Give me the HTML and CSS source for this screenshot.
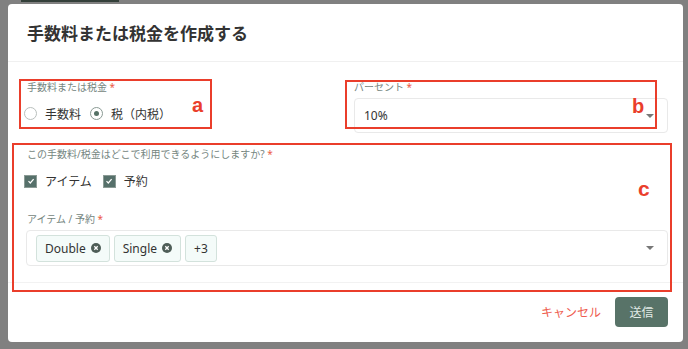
FILE: index.html
```html
<!DOCTYPE html>
<html lang="ja">
<head>
  <meta charset="UTF-8">
  <meta name="viewport" content="width=device-width, initial-scale=1.0">
  <title>手数料または税金を作成する</title>
  <link rel="stylesheet" href="styles.css">
</head>
<body>
  <!-- ページの一部（オーバーレイの下） -->
  <div class="behind-bar"></div>

  <div class="modal">
    <div class="modal-header">
      <h2>手数料または税金を作成する</h2>
    </div>

    <div class="modal-body">
      <div class="two-col">
        <div class="field">
          <div class="field-label">手数料または税金 <span class="req">*</span></div>
          <div class="choice-row">
            <label class="radio"><span class="radio-mark"></span>手数料</label>
            <label class="radio checked"><span class="radio-mark"></span>税（内税）</label>
          </div>
        </div>
        <div class="field">
          <div class="field-label">パーセント <span class="req">*</span></div>
          <div class="select">
            <span>10%</span>
            <span class="caret"></span>
          </div>
        </div>
      </div>

      <div class="field">
        <div class="field-label">この手数料/税金はどこで利用できるようにしますか? <span class="req">*</span></div>
        <div class="choice-row checks">
          <label class="check"><span class="check-mark"><svg width="8" height="8" viewBox="0 0 8 8"><path d="M1.5 4.2 L3.3 6 L6.6 2.2" fill="none" stroke="#fff" stroke-width="1.2"/></svg></span>アイテム</label>
          <label class="check"><span class="check-mark"><svg width="8" height="8" viewBox="0 0 8 8"><path d="M1.5 4.2 L3.3 6 L6.6 2.2" fill="none" stroke="#fff" stroke-width="1.2"/></svg></span>予約</label>
        </div>
      </div>

      <div class="field field-tags">
        <div class="field-label">アイテム / 予約 <span class="req">*</span></div>
        <div class="select multi">
          <div class="tags">
            <span class="tag">Double <svg class="tag-x" width="10" height="10" viewBox="0 0 10 10"><circle cx="5" cy="5" r="5" fill="#4e5d57"/><path d="M3.3 3.3 L6.7 6.7 M6.7 3.3 L3.3 6.7" stroke="#fff" stroke-width="1.3"/></svg></span>
            <span class="tag">Single <svg class="tag-x" width="10" height="10" viewBox="0 0 10 10"><circle cx="5" cy="5" r="5" fill="#4e5d57"/><path d="M3.3 3.3 L6.7 6.7 M6.7 3.3 L3.3 6.7" stroke="#fff" stroke-width="1.3"/></svg></span>
            <span class="tag">+3</span>
          </div>
          <span class="caret"></span>
        </div>
      </div>
    </div>

    <div class="modal-footer">
      <button class="btn-cancel">キャンセル</button>
      <button class="btn-submit">送信</button>
    </div>

    <!-- 説明用の赤い枠 -->
    <div class="note note-a"><span>a</span></div>
    <div class="note note-b"><span>b</span></div>
    <div class="note note-c"><span>c</span></div>
  </div>
</body>
</html>
```

FILE: styles.css
```css
body {
  margin: 0;
  background: #808080;
  font-family: "Noto Sans", "Noto Sans CJK JP", sans-serif;
  color: #333;
}

.behind-bar {
  width: 98px;
  height: 2px;
  margin-left: 21px;
  background: #34403a;
}

/* モーダル本体 */
.modal {
  position: relative;
  width: 675px;
  height: 338px;
  margin: 2px 0 0 8px;
  background: #fff;
  border-radius: 4px;
  box-sizing: border-box;
  display: flex;
  flex-direction: column;
}

.modal-header {
  height: 58px;
  box-sizing: border-box;
  padding: 0 19px;
  display: flex;
  align-items: center;
  border-bottom: 1px solid #f0f0f0;
}

.modal-header h2 {
  margin: 0;
  font-size: 17px;
  font-weight: 600;
  color: #333;
}

.modal-body {
  padding: 18px 15px 16px 19px;
  border-bottom: 1px solid #f2f2f2;
}

.two-col {
  display: grid;
  grid-template-columns: 314px 1fr;
  column-gap: 13px;
}

.field {
  margin-bottom: 14px;
}

.field-tags {
  margin-bottom: 0;
}

.field-label {
  font-size: 10px;
  line-height: 14px;
  color: #748580;
  margin-bottom: 4px;
}

.req {
  color: #ec5a45;
}

/* ラジオとチェックボックス */
.choice-row {
  display: flex;
  align-items: center;
  height: 31px;
  font-size: 12px;
  color: #333;
}

.choice-row.checks {
  height: 28px;
  margin-top: 6px;
  margin-bottom: 17px;
}

.radio, .check {
  display: flex;
  align-items: center;
  margin-right: 12px;
}

.radio-mark {
  width: 13px;
  height: 13px;
  box-sizing: border-box;
  border: 1px solid #b9bfbd;
  border-radius: 50%;
  margin: 0 8px 0 -3px;
  display: flex;
  align-items: center;
  justify-content: center;
}

.radio.checked .radio-mark {
  border-color: #8a9a94;
}

.radio.checked .radio-mark::after {
  content: "";
  width: 5px;
  height: 5px;
  border-radius: 50%;
  background: #567266;
}

.check {
  margin-right: 14px;
}

.check-mark {
  width: 13px;
  height: 13px;
  background: #56706a;
  border: 1px solid #8b9b95;
  box-sizing: border-box;
  margin: 0 8px 0 -3px;
  display: flex;
  align-items: center;
  justify-content: center;
}

/* セレクト */
.select {
  height: 35px;
  box-sizing: border-box;
  border: 1px solid #e9e9e9;
  border-radius: 4px;
  padding: 0 13px 0 9px;
  display: flex;
  align-items: center;
  justify-content: space-between;
  font-size: 12px;
}

.select.multi {
  height: 36px;
  margin-left: -1px;
  padding-left: 9px;
}

.caret {
  width: 0;
  height: 0;
  border-left: 4px solid transparent;
  border-right: 4px solid transparent;
  border-top: 4px solid #777;
}

.tags {
  display: flex;
  gap: 4px;
}

.tag {
  height: 27px;
  box-sizing: border-box;
  padding: 0 8px;
  display: flex;
  align-items: center;
  gap: 5px;
  background: #f4fbf9;
  border: 1px solid #d3e2dc;
  border-radius: 3px;
  font-size: 12px;
  color: #333;
}

/* フッター */
.modal-footer {
  display: flex;
  justify-content: flex-end;
  align-items: center;
  gap: 14px;
  padding: 14px 15px 0 0;
}

.btn-cancel {
  background: none;
  border: none;
  padding: 0;
  font-family: inherit;
  font-size: 12px;
  color: #ee5c4f;
}

.btn-submit {
  width: 53px;
  height: 30px;
  border: none;
  border-radius: 4px;
  background: #587368;
  color: #e2ebe7;
  font-family: inherit;
  font-size: 12px;
}

/* 説明用の枠 */
.note {
  position: absolute;
  border: 2px solid #ea3e2b;
  box-sizing: border-box;
}

.note span {
  position: absolute;
  font-family: "Liberation Sans", Arial, sans-serif;
  font-weight: bold;
  font-size: 20px;
  color: #ea3e2b;
  line-height: 1;
}

.note-a { left: 11px; top: 75px; width: 193px; height: 50px; }
.note-a span { left: 171px; top: 14px; }

.note-b { left: 337px; top: 76px; width: 312px; height: 49px; }
.note-b span { left: 285px; top: 14px; }

.note-c { left: 4px; top: 139px; width: 660px; height: 149px; }
.note-c span { left: 624px; top: 33px; font-size: 21px; }
```
